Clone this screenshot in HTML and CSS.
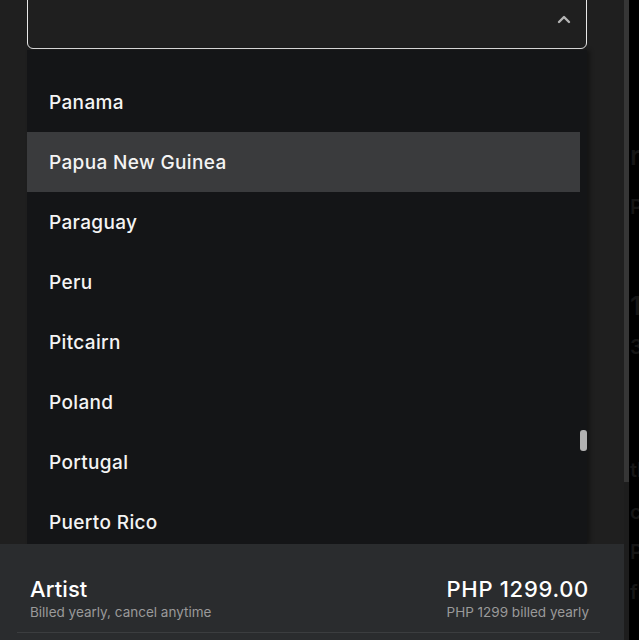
FILE: index.html
```html
<!DOCTYPE html>
<html lang="en">
<head>
<meta charset="utf-8">
<title>Country select</title>
<link rel="stylesheet" href="styles.css">
</head>
<body>
<div class="app">
  <div class="panel">
    <div class="content">
      <div class="select">
        <svg class="chevron" width="14" height="10" viewBox="0 0 14 10"><path d="M2 8 L7 3 L12 8" fill="none" stroke="#b4b4b4" stroke-width="2.4" stroke-linecap="round" stroke-linejoin="round"/></svg>
      </div>
      <div class="listbox">
        <ul class="options">
          <li class="option">Panama</li>
          <li class="option active">Papua New Guinea</li>
          <li class="option">Paraguay</li>
          <li class="option">Peru</li>
          <li class="option">Pitcairn</li>
          <li class="option">Poland</li>
          <li class="option">Portugal</li>
          <li class="option">Puerto Rico</li>
        </ul>
        <div class="list-track"><div class="list-thumb"></div></div>
      </div>
    </div>
    <div class="footer">
      <div class="plan">
        <div class="plan-col">
          <div class="plan-name">Artist</div>
          <div class="plan-sub">Billed yearly, cancel anytime</div>
        </div>
        <div class="plan-col right">
          <div class="plan-name price">PHP 1299.00</div>
          <div class="plan-sub">PHP 1299 billed yearly</div>
        </div>
      </div>
      <div class="divider"></div>
    </div>
  </div>
  <div class="panel-track"><div class="panel-thumb"></div></div>
  <div class="backdrop">
    <span class="ghost g1">rc</span>
    <span class="ghost g2">P</span>
    <span class="ghost g3">1</span>
    <span class="ghost g4">3</span>
    <span class="ghost g5">tl</span>
    <span class="ghost g6">c</span>
    <span class="ghost g7">P</span>
    <span class="ghost g8">f</span>
  </div>
</div>
</body>
</html>
```

FILE: styles.css
```css
* { box-sizing: border-box; }
html, body {
  margin: 0;
  padding: 0;
  width: 639px;
  height: 640px;
  overflow: hidden;
  background: #000;
  font-family: Inter, "Noto Sans", "Liberation Sans", sans-serif;
}
.app {
  display: flex;
  width: 639px;
  height: 640px;
}
.panel {
  width: 624px;
  height: 640px;
  background: #1f1f1f;
  display: flex;
  flex-direction: column;
  flex-shrink: 0;
}
.content {
  flex: 1;
  display: flex;
  flex-direction: column;
  padding: 0 37px 0 27px;
  min-height: 0;
}
.select {
  height: 60px;
  margin-top: -11px;
  border: 1px solid #e8e8e8;
  border-radius: 6px;
  background: #1f1f1f;
  display: flex;
  align-items: center;
  justify-content: flex-end;
  padding-right: 15px;
  flex-shrink: 0;
}
.listbox {
  margin-top: 1px;
  flex: 1;
  background: #141517;
  display: flex;
  min-height: 0;
  box-shadow: 3px 0 4px rgba(0,0,0,0.35);
  overflow: hidden;
}
.options {
  list-style: none;
  margin: 0;
  padding: 22px 0 0;
  flex: 1;
}
.option {
  height: 60px;
  display: flex;
  align-items: center;
  padding-left: 22px;
  color: #f4f4f4;
  font-size: 19px;
  font-weight: 500;
  letter-spacing: 0.35px;
}
.option.active { background: #3a3b3d; }
.list-track {
  width: 7px;
  position: relative;
}
.list-thumb {
  position: absolute;
  left: 0;
  top: 380px;
  width: 7px;
  height: 21px;
  border-radius: 3px;
  background: #b1b1b1;
}
.footer {
  height: 96px;
  background: #2a2c2e;
  flex-shrink: 0;
  display: flex;
  flex-direction: column;
  padding-top: 32px;
}
.plan {
  display: flex;
  justify-content: space-between;
  padding: 0 35px 0 30px;
}
.plan-col { display: flex; flex-direction: column; }
.plan-col.right { align-items: flex-end; }
.plan-name {
  color: #ffffff;
  font-size: 22px;
  font-weight: 500;
  line-height: 26px;
  letter-spacing: 0.1px;
}
.plan-name.price { letter-spacing: 0.7px; }
.plan-sub {
  color: #9a9a9a;
  font-size: 13.5px;
  line-height: 18px;
  margin-top: 1px;
}
.divider {
  margin: 11px 24px 0 17px;
  height: 1px;
  background: #3b3d3f;
}
.panel-track {
  width: 5px;
  height: 640px;
  background: #1d1d1d;
  flex-shrink: 0;
}
.panel-thumb {
  height: 482px;
  background: #363636;
}
.backdrop {
  flex: 1;
  position: relative;
  background: #000;
  overflow: hidden;
}
.ghost {
  position: absolute;
  left: 1px;
  color: #151515;
  font-size: 26px;
  font-weight: 600;
}
.g1 { top: 140px; }
.g2 { top: 195px; font-size: 20px; }
.g3 { top: 290px; }
.g4 { top: 335px; font-size: 20px; }
.g5 { top: 458px; font-size: 20px; }
.g6 { top: 500px; font-size: 20px; }
.g7 { top: 540px; font-size: 20px; }
.g8 { top: 580px; font-size: 20px; }
```
